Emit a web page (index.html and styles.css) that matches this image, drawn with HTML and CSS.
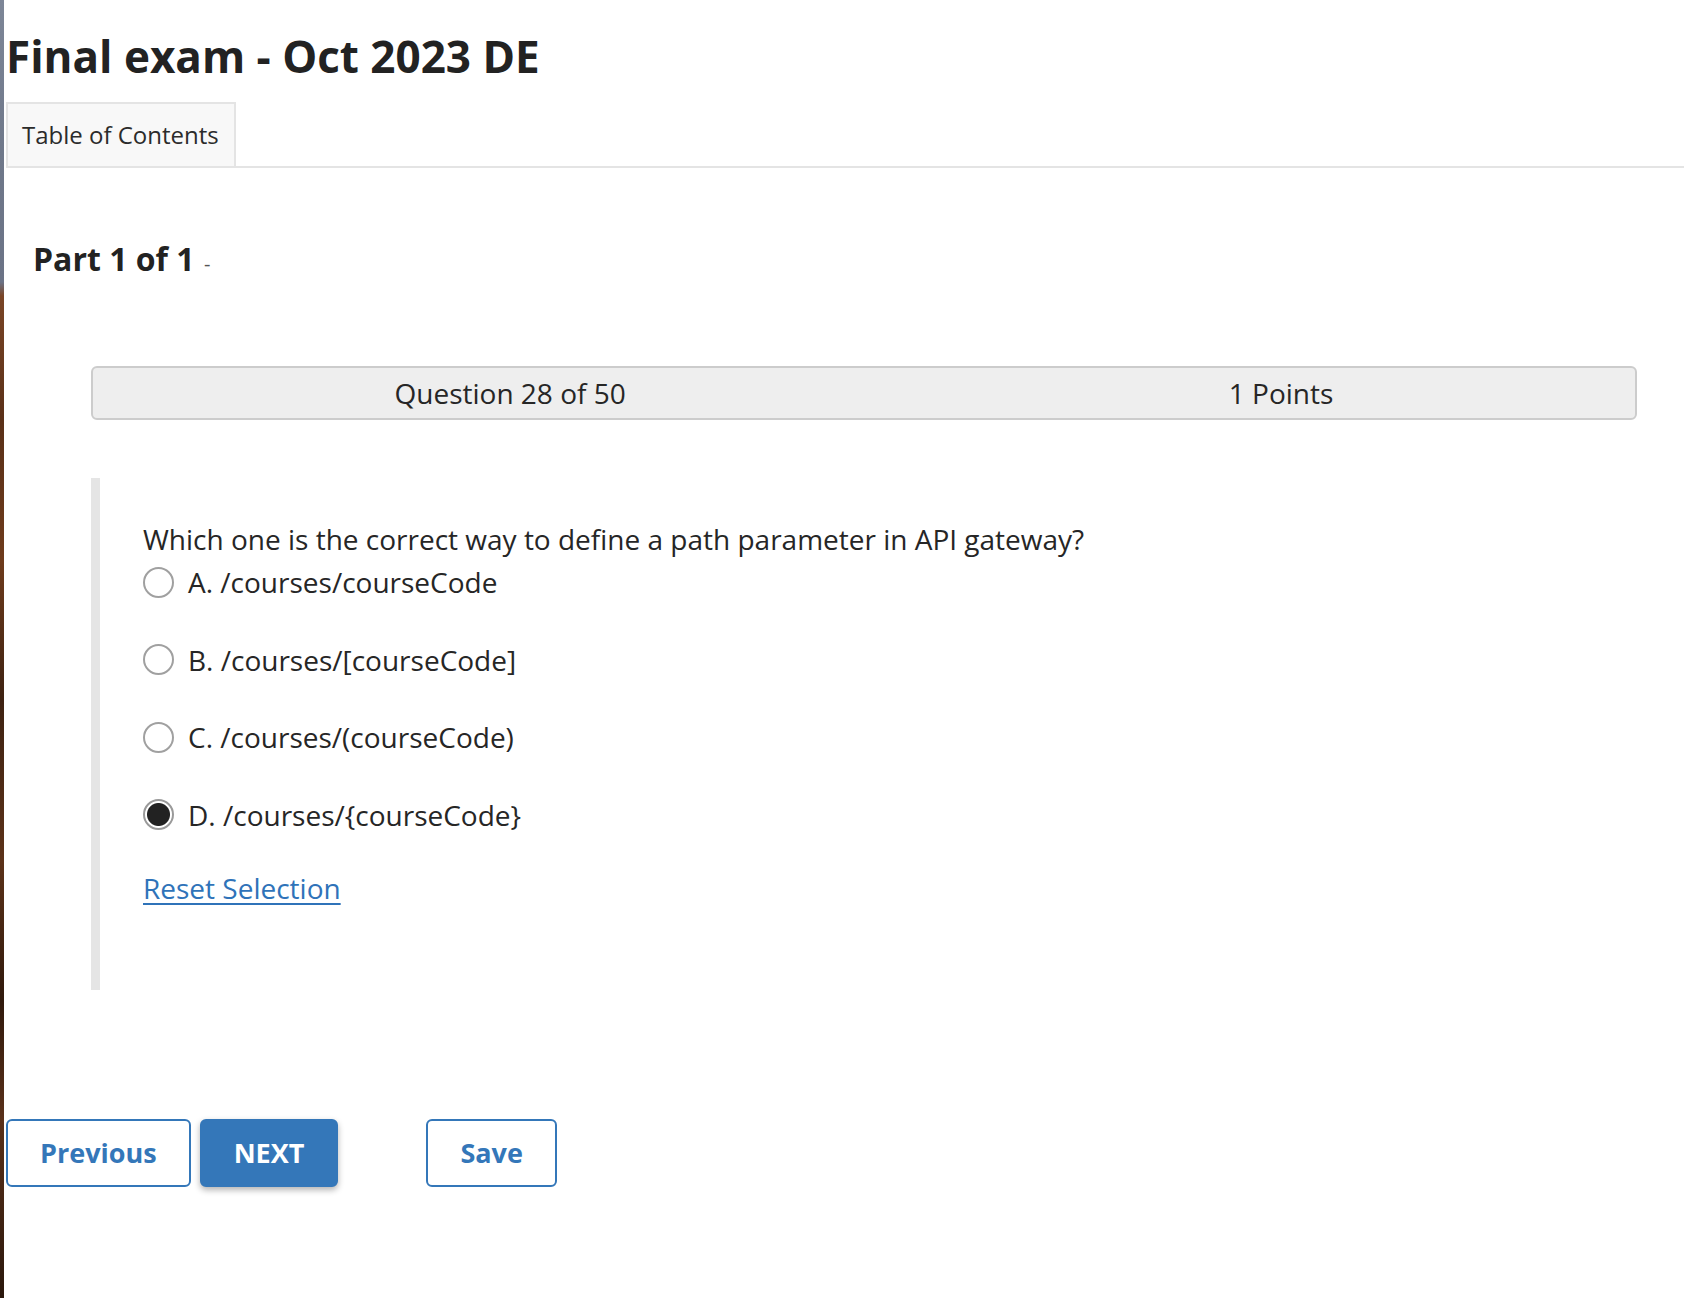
FILE: index.html
```html
<!DOCTYPE html>
<html lang="en">
<head>
<meta charset="utf-8">
<title>Final exam - Oct 2023 DE</title>
<link rel="stylesheet" href="styles.css">
</head>
<body>
<div class="shell">
  <div class="desk"></div>
  <main class="page">
    <h1 class="title">Final exam - Oct 2023 DE</h1>
    <nav class="tabs">
      <div class="tab">Table of Contents</div>
    </nav>
    <section class="part">
      <h2 class="part-title">Part 1 of 1 <span class="part-dash">-</span></h2>
      <div class="q-area">
        <div class="q-bar">
          <div class="q-cell">Question 28 of 50</div>
          <div class="q-cell">1 Points</div>
        </div>
        <div class="q-body">
          <p class="q-text">Which one is the correct way to define a path parameter in API gateway?</p>
          <div class="options">
            <label class="opt"><input class="radio" type="radio" name="q28"><span>A. /courses/courseCode</span></label>
            <label class="opt"><input class="radio" type="radio" name="q28"><span>B. /courses/[courseCode]</span></label>
            <label class="opt"><input class="radio" type="radio" name="q28"><span>C. /courses/(courseCode)</span></label>
            <label class="opt"><input class="radio" type="radio" name="q28" checked><span>D. /courses/{courseCode}</span></label>
          </div>
          <p class="reset-row"><a class="reset" href="#">Reset Selection</a></p>
        </div>
      </div>
    </section>
    <div class="actions">
      <button class="btn btn-outline" type="button">Previous</button>
      <button class="btn btn-primary" type="button">NEXT</button>
      <button class="btn btn-outline btn-save" type="button">Save</button>
    </div>
  </main>
</div>
</body>
</html>
```

FILE: styles.css
```css
html, body {
  margin: 0;
  padding: 0;
  background: #ffffff;
}

body {
  font-family: "Open Sans", "Noto Sans", "Liberation Sans", sans-serif;
  color: #262626;
}

.shell {
  display: flex;
  min-height: 1298px;
}

.desk {
  width: 4px;
  flex: 0 0 4px;
  background: linear-gradient(to bottom,
    #7d8697 0,
    #6f788a 150px,
    #6b7386 282px,
    #7a4526 296px,
    #5a3018 420px,
    #6e3b1c 560px,
    #3e2212 700px,
    #5c3219 860px,
    #30190c 1000px,
    #5a311a 1120px,
    #2a170c 1298px);
}

.page {
  flex: 1;
  padding-left: 2px;
  min-width: 0;
}

.title {
  margin: 26px 0 16px 0;
  font-size: 44px;
  line-height: 60px;
  font-weight: 700;
  color: #222222;
}

.tabs {
  display: flex;
  border-bottom: 2px solid #e4e4e4;
}

.tab {
  border: 2px solid #e4e4e4;
  border-bottom: 0;
  background: #f8f8f8;
  padding: 14px 15px 15px 14px;
  font-size: 24px;
  line-height: 33px;
  color: #2b2b2b;
}

.part-title {
  margin: 69px 0 0;
  padding-left: 27px;
  font-size: 32px;
  line-height: 44px;
  font-weight: 700;
  color: #222222;
}

.part-dash {
  font-size: 20px;
  font-weight: 400;
  color: #555555;
  margin-left: 1px;
}

.q-area {
  margin: 80px 47px 0 85px;
}

.q-bar {
  display: grid;
  grid-template-columns: 54.1% 1fr;
  background: #eeeeee;
  border: 2px solid #cccccc;
  border-radius: 6px;
  padding: 6px 0;
}

.q-cell {
  text-align: center;
  font-size: 28px;
  line-height: 38px;
  color: #262626;
}

.q-body {
  margin-top: 58px;
  border-left: 9px solid #e5e5e5;
  padding: 40px 0 81px 43px;
}

.q-text {
  margin: 0;
  font-size: 28px;
  line-height: 42px;
}

.options {
  margin-top: 1px;
  display: flex;
  flex-direction: column;
  gap: 35.5px;
}

.opt {
  display: flex;
  align-items: center;
  gap: 14px;
  height: 42px;
  font-size: 28px;
  line-height: 42px;
  cursor: pointer;
}

.radio {
  appearance: none;
  -webkit-appearance: none;
  margin: 0;
  width: 31px;
  height: 31px;
  flex: 0 0 31px;
  border: 2px solid #a0a0a0;
  border-radius: 50%;
  background: #ffffff;
  box-sizing: border-box;
}

.radio:checked {
  background: radial-gradient(circle, #222222 0, #222222 11px, #ffffff 12px);
  border-color: #9a9a9a;
}

.reset-row {
  margin: 31.5px 0 0;
  font-size: 28px;
  line-height: 42px;
}

.reset {
  color: #2f73b9;
  text-decoration: underline;
  text-decoration-thickness: 1.5px;
  text-underline-offset: 4px;
}

.actions {
  margin-top: 129px;
  display: flex;
  align-items: flex-start;
  gap: 9px;
}

.btn {
  font-family: "Open Sans", "Noto Sans", "Liberation Sans", sans-serif;
  font-size: 27px;
  font-weight: 700;
  line-height: 38px;
  padding: 13px 32px;
  border-radius: 6px;
  border: 2px solid #3477b9;
  cursor: pointer;
}

.btn-outline {
  background: #ffffff;
  color: #3477b9;
}

.btn-primary {
  background: #3477b9;
  color: #ffffff;
  box-shadow: 0 3px 6px rgba(0, 0, 0, 0.3);
}

.btn-save {
  margin-left: 79px;
}
```
